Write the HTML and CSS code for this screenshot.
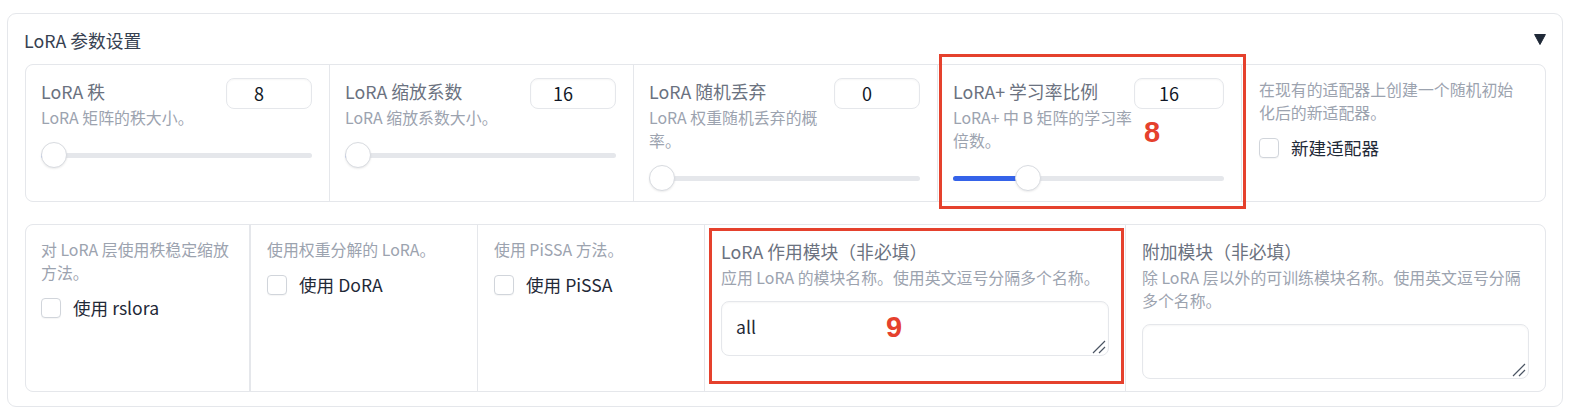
FILE: index.html
```html
<!DOCTYPE html>
<html lang="zh-CN">
<head>
<meta charset="utf-8">
<title>LoRA 参数设置</title>
<link rel="stylesheet" href="styles.css">
</head>
<body>
<div class="page">
  <div class="accordion">
    <div class="acc-head">
      <span class="acc-title">LoRA 参数设置</span>
      <svg class="caret" width="12" height="11" viewBox="0 0 12 11"><path d="M0.6 0.5 H11.4 L6 10.5 Z" fill="#1f2937" stroke="#1f2937" stroke-width="1" stroke-linejoin="round"/></svg>
    </div>
    <div class="acc-body">
      <div class="row row-top">
        <div class="cell">
          <div class="head">
            <div class="head-text">
              <div class="label">LoRA 秩</div>
              <div class="info">LoRA 矩阵的秩大小。</div>
            </div>
            <div class="num">8</div>
          </div>
          <div class="slider"><div class="track"><div class="fill" style="width:2px"></div></div><div class="thumb" style="left:0px"></div></div>
        </div>
        <div class="cell">
          <div class="head">
            <div class="head-text">
              <div class="label">LoRA 缩放系数</div>
              <div class="info">LoRA 缩放系数大小。</div>
            </div>
            <div class="num">16</div>
          </div>
          <div class="slider"><div class="track"><div class="fill" style="width:2px"></div></div><div class="thumb" style="left:0px"></div></div>
        </div>
        <div class="cell">
          <div class="head">
            <div class="head-text">
              <div class="label">LoRA 随机丢弃</div>
              <div class="info">LoRA 权重随机丢弃的概率。</div>
            </div>
            <div class="num">0</div>
          </div>
          <div class="slider"><div class="track"><div class="fill" style="width:0px"></div></div><div class="thumb" style="left:0px"></div></div>
        </div>
        <div class="cell">
          <div class="head">
            <div class="head-text">
              <div class="label">LoRA+ 学习率比例</div>
              <div class="info">LoRA+ 中 B 矩阵的学习率倍数。</div>
            </div>
            <div class="num num-wide">16</div>
          </div>
          <div class="slider"><div class="track"><div class="fill" style="width:70px"></div></div><div class="thumb" style="left:62px"></div></div>
        </div>
        <div class="cell cell-last">
          <div class="info">在现有的适配器上创建一个随机初始化后的新适配器。</div>
          <label class="check"><span class="box"></span><span class="check-label">新建适配器</span></label>
        </div>
      </div>

      <div class="row row-bottom">
        <div class="cell cell-wide-edge">
          <div class="info">对 LoRA 层使用秩稳定缩放方法。</div>
          <label class="check"><span class="box"></span><span class="check-label">使用 rslora</span></label>
        </div>
        <div class="cell">
          <div class="info">使用权重分解的 LoRA。</div>
          <label class="check"><span class="box"></span><span class="check-label">使用 DoRA</span></label>
        </div>
        <div class="cell">
          <div class="info">使用 PiSSA 方法。</div>
          <label class="check"><span class="box"></span><span class="check-label">使用 PiSSA</span></label>
        </div>
        <div class="cell">
          <div class="label">LoRA 作用模块（非必填）</div>
          <div class="info">应用 LoRA 的模块名称。使用英文逗号分隔多个名称。</div>
          <div class="ta-wrap">
            <textarea class="ta">all</textarea>
            <svg class="grip" width="14" height="14" viewBox="0 0 14 14"><path d="M1 13 L13 1 M7 13 L13 7" stroke="#4b5563" stroke-width="1.2" fill="none"/></svg>
          </div>
        </div>
        <div class="cell">
          <div class="label">附加模块（非必填）</div>
          <div class="info">除 LoRA 层以外的可训练模块名称。使用英文逗号分隔多个名称。</div>
          <div class="ta-wrap">
            <textarea class="ta"></textarea>
            <svg class="grip" width="14" height="14" viewBox="0 0 14 14"><path d="M1 13 L13 1 M7 13 L13 7" stroke="#4b5563" stroke-width="1.2" fill="none"/></svg>
          </div>
        </div>
      </div>
    </div>
  </div>

  <div class="mark mark-8"></div>
  <span class="mark-num mark-num-8">8</span>
  <div class="mark mark-9"></div>
  <span class="mark-num mark-num-9">9</span>
</div>
</body>
</html>
```

FILE: styles.css
```css
* { box-sizing: border-box; }

html, body {
  margin: 0;
  padding: 0;
  background: #ffffff;
}

body {
  font-family: "Noto Sans CJK SC", "Noto Sans", sans-serif;
  font-size: 17.6px;
  color: #1f2937;
}

.page {
  position: relative;
  width: 1572px;
  height: 418px;
  padding: 13px 9px 0 7px;
}

.accordion {
  border: 1px solid #e5e7eb;
  border-radius: 9px;
  background: #ffffff;
}

.acc-head {
  display: flex;
  align-items: center;
  justify-content: space-between;
  padding: 13px 16px 0 16px;
  height: 39px;
}

.acc-title {
  font-size: 17.8px;
  line-height: 26px;
  color: #374151;
}

.caret {
  display: block;
  margin-top: -2px;
}

.acc-body {
  display: flex;
  flex-direction: column;
  gap: 22px;
  padding: 11px 16px 14px 17px;
}

.row {
  display: grid;
  gap: 1px;
  background: #e5e7eb;
  border: 1px solid #e5e7eb;
  border-radius: 8px;
  overflow: hidden;
}

.row-top {
  grid-template-columns: repeat(5, 1fr);
}

.row-bottom {
  grid-template-columns: 224px 226px 226px 420px 1fr;
}

.cell {
  background: #ffffff;
  display: flex;
  flex-direction: column;
  align-items: stretch;
}

.row-top .cell {
  padding: 13px 17px 10px 15px;
}

.row-top .cell-last {
  padding-left: 17px;
  padding-right: 20px;
}

.row-bottom .cell {
  padding: 13px 16px 12px 16px;
}

.row-bottom .cell-wide-edge {
  padding-left: 15px;
  border-right: 1px solid #e5e7eb;
}

.head {
  display: flex;
  align-items: flex-start;
  gap: 2px;
}

.head-text {
  flex: 1;
  min-width: 0;
}

.label {
  font-size: 17.8px;
  line-height: 26px;
  color: #6b7280;
}

.info {
  font-size: 15.9px;
  line-height: 23px;
  color: #9ca3af;
  margin-top: 2px;
}

.cell > .info:first-child {
  margin-top: 0;
}

.num {
  flex: none;
  width: 86px;
  height: 31px;
  border: 1px solid #e5e7eb;
  border-radius: 8px;
  background: #ffffff;
  box-shadow: inset 0 1px 2px rgba(0, 0, 0, 0.04);
  font-size: 18px;
  line-height: 29px;
  text-align: center;
  padding-right: 20px;
  color: #111827;
}

.num-wide {
  width: 90px;
}

.slider {
  position: relative;
  display: flex;
  align-items: center;
  height: 26px;
  margin-top: 13px;
}

.track {
  flex: 1;
  height: 5px;
  border-radius: 3px;
  background: #e5e7eb;
  overflow: hidden;
}

.fill {
  height: 100%;
  background: #3563e9;
}

.thumb {
  position: absolute;
  top: 0;
  width: 26px;
  height: 26px;
  border-radius: 50%;
  background: #ffffff;
  border: 1px solid #d8dbe0;
  box-shadow: 0 1px 2px rgba(0, 0, 0, 0.08);
}

.check {
  display: flex;
  align-items: center;
  gap: 12px;
  margin-top: 10px;
  height: 27px;
}

.box {
  width: 20px;
  height: 20px;
  border: 1px solid #d1d5db;
  border-radius: 4px;
  background: #ffffff;
  box-shadow: 0 1px 1px rgba(0, 0, 0, 0.04);
}

.check-label {
  font-size: 17.6px;
  line-height: 27px;
  color: #1f2937;
}

.ta-wrap {
  position: relative;
  margin-top: 12px;
}

.ta {
  display: block;
  width: 100%;
  height: 55px;
  padding: 13px 14px;
  border: 1px solid #e5e7eb;
  border-radius: 8px;
  background: #ffffff;
  box-shadow: inset 0 1px 2px rgba(0, 0, 0, 0.04);
  font-family: "Noto Sans CJK SC", "Noto Sans", sans-serif;
  font-size: 17.6px;
  line-height: 24px;
  color: #1f2937;
  resize: none;
  outline: none;
}

.grip {
  position: absolute;
  right: 3px;
  bottom: 2px;
}

.mark {
  position: absolute;
  border: 3px solid #e5412d;
}

.mark-8 {
  left: 939px;
  top: 54px;
  width: 307px;
  height: 155px;
}

.mark-9 {
  left: 709px;
  top: 228px;
  width: 415px;
  height: 156px;
}

.mark-num {
  position: absolute;
  font-family: "Liberation Sans", Arial, sans-serif;
  font-weight: bold;
  font-size: 29px;
  line-height: 29px;
  color: #e5412d;
}

.mark-num-8 {
  left: 1144px;
  top: 118px;
}

.mark-num-9 {
  left: 886px;
  top: 313px;
}
```
